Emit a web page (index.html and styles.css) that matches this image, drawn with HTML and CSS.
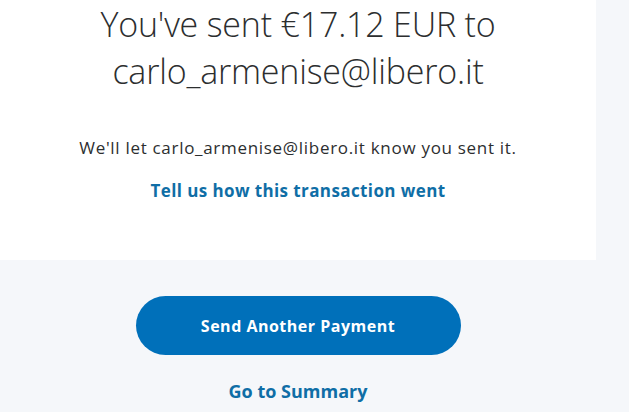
FILE: index.html
```html
<!DOCTYPE html>
<html>
<head>
<meta charset="utf-8">
<link rel="stylesheet" href="styles.css">
</head>
<body>
<div class="page">
  <section class="card">
    <h1 class="title">You've sent €17.12 EUR to<br>carlo_armenise@libero.it</h1>
    <p class="note">We'll let carlo_armenise@libero.it know you sent it.</p>
    <a class="link feedback" href="#">Tell us how this transaction went</a>
  </section>
  <div class="actions">
    <button class="primary">Send Another Payment</button>
    <a class="link summary" href="#">Go to Summary</a>
  </div>
</div>
</body>
</html>
```
FILE: styles.css
```css
html, body {
  margin: 0;
  padding: 0;
  background: #f5f7fa;
  font-family: "Open Sans", "Liberation Sans", sans-serif;
  color: #2c2e2f;
}
.page {
  width: 596px;
  display: flex;
  flex-direction: column;
  overflow: hidden;
  height: 412px;
}
.card {
  background: #ffffff;
  height: 260px;
  display: flex;
  flex-direction: column;
  align-items: center;
  box-sizing: border-box;
  padding-top: 1px;
}
.title {
  margin: 0;
  font-weight: 300;
  font-size: 34px;
  line-height: 47px;
  text-align: center;
  color: #2c2e2f;
  letter-spacing: -0.2px;
}
.note {
  margin: 42px 0 0;
  font-size: 17px;
  line-height: 22px;
  letter-spacing: 0.7px;
  color: #2c2e2f;
}
.link {
  color: #0f6ea6;
  font-weight: 700;
  text-decoration: none;
}
.feedback {
  margin-top: 21px;
  font-size: 17px;
  line-height: 22px;
  letter-spacing: 0.4px;
}
.actions {
  display: flex;
  flex-direction: column;
  align-items: center;
  padding-top: 36px;
}
.primary {
  width: 325px;
  height: 59px;
  border: none;
  border-radius: 30px;
  background: #0070ba;
  color: #ffffff;
  font-family: "Open Sans", "Liberation Sans", sans-serif;
  font-weight: 700;
  font-size: 16px;
  letter-spacing: 0.5px;
}
.summary {
  margin-top: 25px;
  font-size: 18px;
  line-height: 22px;
}
```
